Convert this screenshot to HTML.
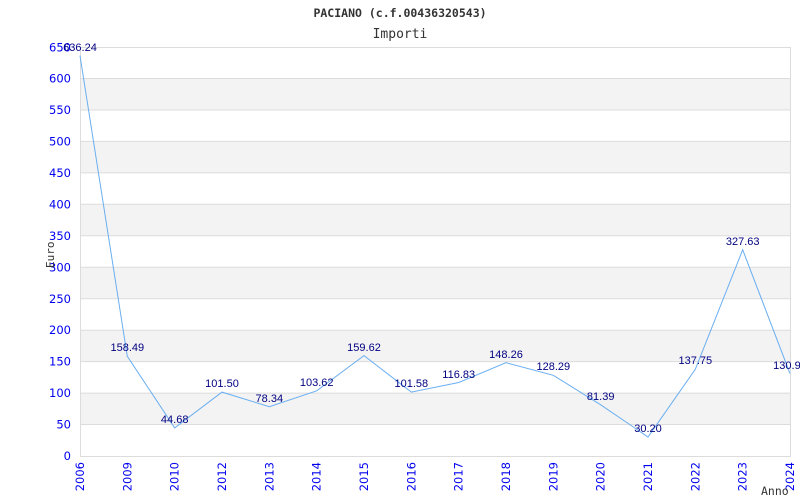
<!DOCTYPE html>
<html><head><meta charset="utf-8"><style>
html,body{margin:0;padding:0;background:#fff;width:800px;height:500px;overflow:hidden}
</style></head><body>
<svg width="800" height="500" xmlns="http://www.w3.org/2000/svg" style="display:block">
<g fill="#f3f3f3">
<rect x="80" y="78.5" width="710" height="31.5"/>
<rect x="80" y="141.4" width="710" height="31.5"/>
<rect x="80" y="204.3" width="710" height="31.5"/>
<rect x="80" y="267.2" width="710" height="31.5"/>
<rect x="80" y="330.2" width="710" height="31.5"/>
<rect x="80" y="393.1" width="710" height="31.5"/>
</g>
<g stroke="#dcdcdc" stroke-width="1">
<line x1="80" y1="47.5" x2="790" y2="47.5"/><line x1="80" y1="78.5" x2="790" y2="78.5"/><line x1="80" y1="110" x2="790" y2="110"/><line x1="80" y1="141.4" x2="790" y2="141.4"/><line x1="80" y1="172.9" x2="790" y2="172.9"/><line x1="80" y1="204.3" x2="790" y2="204.3"/><line x1="80" y1="235.8" x2="790" y2="235.8"/><line x1="80" y1="267.2" x2="790" y2="267.2"/><line x1="80" y1="298.7" x2="790" y2="298.7"/><line x1="80" y1="330.2" x2="790" y2="330.2"/><line x1="80" y1="361.6" x2="790" y2="361.6"/><line x1="80" y1="393.1" x2="790" y2="393.1"/><line x1="80" y1="424.5" x2="790" y2="424.5"/><line x1="80" y1="456.5" x2="790" y2="456.5"/>
<line x1="80.5" y1="47" x2="80.5" y2="457"/><line x1="790.5" y1="47" x2="790.5" y2="457"/>
</g>
<text x="400" y="17" text-anchor="middle" font-family="DejaVu Sans Mono, Liberation Mono, monospace" font-size="11.5" font-weight="bold" fill="#333">PACIANO (c.f.00436320543)</text>
<text x="400" y="38" text-anchor="middle" font-family="DejaVu Sans Mono, Liberation Mono, monospace" font-size="13" fill="#333">Importi</text>
<g font-family="DejaVu Sans, Liberation Sans, sans-serif" font-size="11.5" fill="#0000ee" text-anchor="end">
<text x="71" y="51.5">650</text><text x="71" y="82.5">600</text><text x="71" y="114">550</text><text x="71" y="145.5">500</text><text x="71" y="177">450</text><text x="71" y="208.5">400</text><text x="71" y="240">350</text><text x="71" y="271.5">300</text><text x="71" y="303">250</text><text x="71" y="334">200</text><text x="71" y="365.5">150</text><text x="71" y="397">100</text><text x="71" y="428.5">50</text><text x="71" y="460">0</text>
</g>
<g font-family="DejaVu Sans, Liberation Sans, sans-serif" font-size="11.5" fill="#0000ee" text-anchor="end">
<text transform="translate(84,462) rotate(-90)">2006</text>
<text transform="translate(131.3,462) rotate(-90)">2009</text>
<text transform="translate(178.7,462) rotate(-90)">2010</text>
<text transform="translate(226,462) rotate(-90)">2012</text>
<text transform="translate(273.3,462) rotate(-90)">2013</text>
<text transform="translate(320.7,462) rotate(-90)">2014</text>
<text transform="translate(368,462) rotate(-90)">2015</text>
<text transform="translate(415.3,462) rotate(-90)">2016</text>
<text transform="translate(462.7,462) rotate(-90)">2017</text>
<text transform="translate(510,462) rotate(-90)">2018</text>
<text transform="translate(557.3,462) rotate(-90)">2019</text>
<text transform="translate(604.7,462) rotate(-90)">2020</text>
<text transform="translate(652,462) rotate(-90)">2021</text>
<text transform="translate(699.3,462) rotate(-90)">2022</text>
<text transform="translate(746.7,462) rotate(-90)">2023</text>
<text transform="translate(794,462) rotate(-90)">2024</text>
</g>
<text transform="translate(54,268) rotate(-90)" font-family="DejaVu Sans Mono, monospace" font-size="11" fill="#333">Euro</text>
<text x="761" y="495" font-family="DejaVu Sans Mono, monospace" font-size="11.5" fill="#333">Anno</text>
<polyline fill="none" stroke="#6aaef0" stroke-width="1" points="80,55.7 127.3,356.3 174.7,427.9 222,392.1 269.3,406.7 316.7,390.8 364,355.6 411.3,392.1 458.7,382.5 506,362.7 553.3,375.3 600.7,404.8 648,437 695.3,369.3 742.7,249.8 790,373.6"/>
<g font-family="Liberation Sans, sans-serif" font-size="11" fill="#000080" text-anchor="middle">
<text x="80" y="51">636.24</text>
<text x="127.3" y="351">158.49</text>
<text x="174.7" y="423">44.68</text>
<text x="222" y="387">101.50</text>
<text x="269.3" y="402">78.34</text>
<text x="316.7" y="386">103.62</text>
<text x="364" y="351">159.62</text>
<text x="411.3" y="387">101.58</text>
<text x="458.7" y="378">116.83</text>
<text x="506" y="358">148.26</text>
<text x="553.3" y="370">128.29</text>
<text x="600.7" y="400">81.39</text>
<text x="648" y="432">30.20</text>
<text x="695.3" y="364">137.75</text>
<text x="742.7" y="245">327.63</text>
<text x="790" y="369">130.93</text>
</g>
</svg>
</body></html>
